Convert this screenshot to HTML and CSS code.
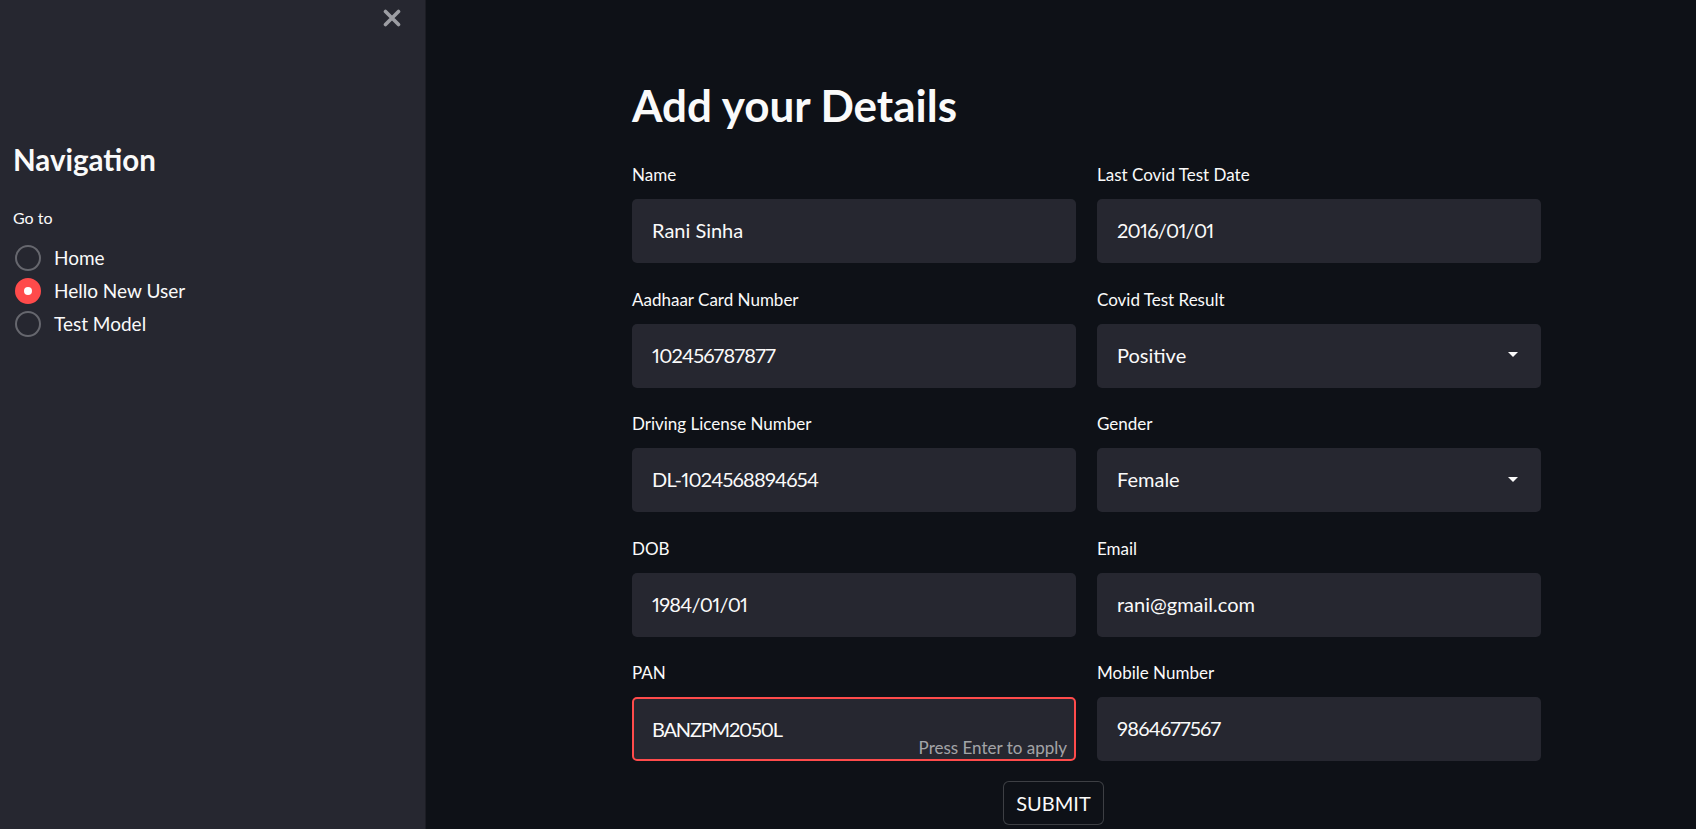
FILE: index.html
```html
<!DOCTYPE html>
<html>
<head>
<meta charset="utf-8">
<link rel="stylesheet" href="styles.css">
</head>
<body>
<aside class="sidebar">
  <div class="sidebar-top">
    <button class="close-btn" aria-label="Close sidebar">
      <svg width="18" height="18" viewBox="0 0 18 18"><path d="M2.5 2.5 L15.5 15.5 M15.5 2.5 L2.5 15.5" stroke="#9c9da3" stroke-width="3.6" stroke-linecap="round"/></svg>
    </button>
  </div>
  <div class="sidebar-body">
    <h2 class="nav-title">Navigation</h2>
    <div class="goto">Go to</div>
    <div class="radio-list">
      <div class="radio-item"><span class="radio"></span><span class="radio-label">Home</span></div>
      <div class="radio-item"><span class="radio checked"></span><span class="radio-label">Hello New User</span></div>
      <div class="radio-item"><span class="radio"></span><span class="radio-label">Test Model</span></div>
    </div>
  </div>
</aside>
<main class="main">
  <div class="content">
    <h1 class="title">Add your Details</h1>
    <div class="form-grid">
      <div class="field"><div class="label">Name</div><div class="box">Rani Sinha</div></div>
      <div class="field"><div class="label">Last Covid Test Date</div><div class="box num">2016/01/01</div></div>
      <div class="field"><div class="label">Aadhaar Card Number</div><div class="box num">102456787877</div></div>
      <div class="field"><div class="label">Covid Test Result</div><div class="box select"><span class="val">Positive</span><span class="caret"></span></div></div>
      <div class="field"><div class="label">Driving License Number</div><div class="box num">DL-1024568894654</div></div>
      <div class="field"><div class="label">Gender</div><div class="box select"><span class="val">Female</span><span class="caret"></span></div></div>
      <div class="field"><div class="label">DOB</div><div class="box num">1984/01/01</div></div>
      <div class="field"><div class="label">Email</div><div class="box">rani@gmail.com</div></div>
      <div class="field"><div class="label">PAN</div><div class="box active"><span class="val code">BANZPM2050L</span><span class="hint">Press Enter to apply</span></div></div>
      <div class="field"><div class="label">Mobile Number</div><div class="box num">9864677567</div></div>
    </div>
    <div class="submit-row"><button class="submit">SUBMIT</button></div>
  </div>
</main>
</body>
</html>
```
FILE: styles.css
```css
* { box-sizing: border-box; }
html, body { margin: 0; padding: 0; }
body {
  display: flex;
  width: 1696px;
  height: 829px;
  overflow: hidden;
  background: #0e1117;
  color: #fafafa;
  font-family: Lato, "Liberation Sans", sans-serif;
  font-variant-numeric: proportional-nums;
}
.sidebar {
  width: 426px;
  flex: none;
  background: #262730;
  border-right: 1px solid #1c1d24;
}
.sidebar-top {
  display: flex;
  justify-content: flex-end;
  padding: 9px 24px 0 0;
}
.close-btn {
  background: none;
  border: 0;
  padding: 0;
  width: 18px;
  height: 18px;
  display: flex;
}
.sidebar-body {
  padding: 0 13px;
}
.nav-title {
  margin: 115px 0 0;
  font-size: 29.5px;
  font-weight: 700;
  line-height: 36px;
}
.goto {
  margin-top: 30px;
  font-size: 16px;
  line-height: 20px;
}
.radio-list {
  margin-top: 13px;
  display: flex;
  flex-direction: column;
}
.radio-item {
  display: flex;
  align-items: center;
  height: 33px;
}
.radio {
  width: 26px;
  height: 26px;
  border-radius: 50%;
  border: 2px solid #66676e;
  margin-left: 2px;
  margin-right: 13px;
  display: flex;
  align-items: center;
  justify-content: center;
}
.radio.checked {
  background: #ff4b4b;
  border-color: #ff4b4b;
}
.radio.checked::after {
  content: "";
  width: 8px;
  height: 8px;
  border-radius: 50%;
  background: #fff;
}
.radio-label {
  font-size: 19px;
}
.main {
  flex: 1;
}
.content {
  width: 909px;
  margin-left: 206px;
  padding-top: 78px;
}
.title {
  margin: 0;
  font-size: 44px;
  font-weight: 700;
  line-height: 54px;
}
.form-grid {
  margin-top: 31px;
  display: grid;
  grid-template-columns: 444px 444px;
  column-gap: 21px;
  row-gap: 24.5px;
}
.label {
  font-size: 17px;
  line-height: 24px;
  margin-bottom: 12px;
}
.box {
  height: 64px;
  background: #262730;
  border-radius: 5px;
  padding: 0 20px;
  display: flex;
  align-items: center;
  font-size: 20px;
  padding-bottom: 2px;
}
.box.num { letter-spacing: -0.75px; }
.box .val { flex: 1; }
.box .code { letter-spacing: -1.2px; }
.caret {
  width: 0;
  height: 0;
  border-left: 5px solid transparent;
  border-right: 5px solid transparent;
  border-top: 5px solid #fafafa;
  margin-right: 3px;
}
.box.active {
  border: 2px solid #ff4b4b;
  padding: 0 7px 0 18px;
}
.hint {
  align-self: flex-end;
  font-size: 17px;
  color: rgba(250, 250, 250, 0.6);
  margin-bottom: 1px;
}
.submit-row {
  padding-left: 371px;
  margin-top: 20px;
}
.submit {
  width: 101px;
  height: 44px;
  background: #0e1117;
  color: #fafafa;
  border: 1px solid rgba(250, 250, 250, 0.2);
  border-radius: 6px;
  font-family: inherit;
  font-size: 20px;
}
```
